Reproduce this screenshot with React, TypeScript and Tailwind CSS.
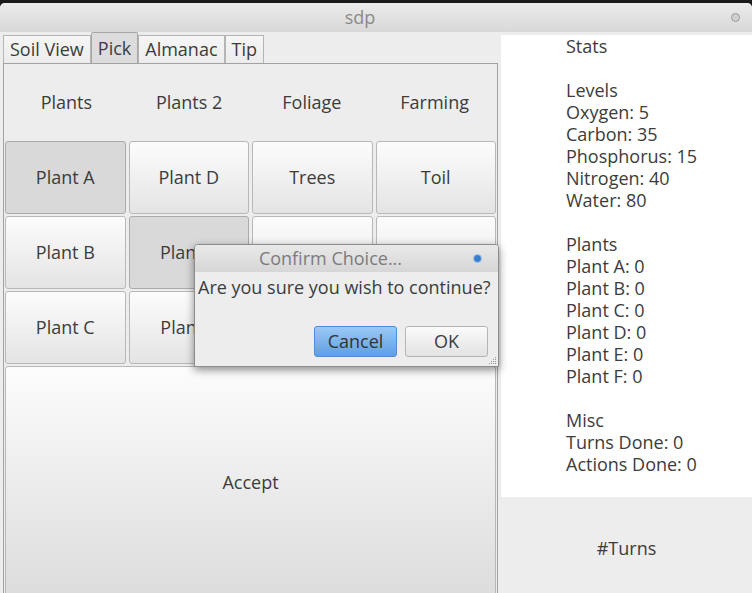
const font = { fontFamily: '"Open Sans", "DejaVu Sans", sans-serif' }

function Btn({ label, pressed }: { label?: string; pressed?: boolean }) {
    return (
        <div
            className={
                'flex items-center justify-center rounded-[3px] border text-[18px] text-[#3c3c3c] ' +
                (pressed
                    ? 'border-[#ababab] bg-[#d9d9d9]'
                    : 'border-[#b8b8b8] bg-gradient-to-b from-[#fcfcfc] to-[#e4e4e4]')
            }
        >
            {label}
        </div>
    )
}

function Tab({ label, active }: { label: string; active?: boolean }) {
    return (
        <div
            className={
                'flex items-center border border-b-0 px-[6px] text-[18px] text-[#3c3c3c] ' +
                (active
                    ? 'h-[31px] rounded-t-[2px] border-[#a6a6a6] bg-[#dcdcdc]'
                    : 'h-[28px] border-[#b5b5b5] bg-gradient-to-b from-[#f6f6f6] to-[#ececec]')
            }
        >
            {label}
        </div>
    )
}

const stats = [
    'Stats',
    '',
    'Levels',
    'Oxygen: 5',
    'Carbon: 35',
    'Phosphorus: 15',
    'Nitrogen: 40',
    'Water: 80',
    '',
    'Plants',
    'Plant A: 0',
    'Plant B: 0',
    'Plant C: 0',
    'Plant D: 0',
    'Plant E: 0',
    'Plant F: 0',
    '',
    'Misc',
    'Turns Done: 0',
    'Actions Done: 0',
]

export default function App() {
    return (
        <div className="relative h-[593px] w-[752px] overflow-hidden bg-[#1a1a1a] pt-[3px]" style={font}>
            {/* window */}
            <div className="flex h-full flex-col overflow-hidden rounded-t-[5px] bg-[#ededed]">
                {/* title bar */}
                <div className="relative flex h-[29px] shrink-0 items-center justify-center bg-gradient-to-b from-[#ebebeb] to-[#d8d8d8] pr-[32px] text-[18px] text-[#8a8a8a]">
                    sdp
                    <div className="absolute right-[12px] top-[10px] h-[9px] w-[9px] rounded-full border border-[#9a9a9a] bg-[#d0d0d0]"></div>
                </div>

                <div className="flex flex-1">
                    {/* left side */}
                    <div className="flex w-[501px] flex-col pl-[3px] pr-[3px]">
                        <div className="flex h-[31px] items-end">
                            <Tab label="Soil View" />
                            <Tab label="Pick" active />
                            <Tab label="Almanac" />
                            <Tab label="Tip" />
                        </div>
                        <div className="flex flex-1 flex-col border border-[#a2a2a2] px-[1px]">
                            <div className="grid h-[77px] shrink-0 grid-cols-4 items-center text-center text-[18px] text-[#3c3c3c]">
                                <span>Plants</span>
                                <span>Plants 2</span>
                                <span>Foliage</span>
                                <span>Farming</span>
                            </div>
                            <div className="grid shrink-0 grid-cols-4 grid-rows-[73px_73px_73px] gap-[2px] gap-x-[3px]">
                                <Btn label="Plant A" pressed />
                                <Btn label="Plant D" />
                                <Btn label="Trees" />
                                <Btn label="Toil" />
                                <Btn label="Plant B" />
                                <Btn label="Plant E" pressed />
                                <Btn />
                                <Btn />
                                <Btn label="Plant C" />
                                <Btn label="Plant F" />
                                <Btn />
                                <Btn />
                            </div>
                            <div className="mt-[2px] flex h-[232px] shrink-0 items-center justify-center rounded-[3px] border border-[#b8b8b8] bg-gradient-to-b from-[#fcfcfc] to-[#dcdcdc] text-[18px] text-[#3c3c3c]">
                                Accept
                            </div>
                        </div>
                    </div>

                    {/* right side */}
                    <div className="mt-[3px] flex flex-1 flex-col">
                        <div className="h-[462px] bg-white pl-[65px] text-[18px] leading-[22px] text-[#3c3c3c]">
                            {stats.map((s, i) => (
                                <div key={i} className="h-[22px]">
                                    {s}
                                </div>
                            ))}
                        </div>
                        <div className="flex flex-1 items-center justify-center text-[18px] text-[#3c3c3c]">#Turns</div>
                    </div>
                </div>
            </div>

            {/* dialog */}
            <div className="absolute left-[194px] top-[244px] flex h-[123px] w-[305px] flex-col overflow-hidden rounded-t-[4px] border border-[#8c8c8c] bg-[#ededed] shadow-[0_3px_8px_rgba(0,0,0,0.45)]">
                <div className="relative flex h-[27px] shrink-0 items-center justify-center bg-gradient-to-b from-[#e9e9e9] to-[#d6d6d6] pr-[32px] text-[18px] text-[#7c7c7c]">
                    Confirm Choice...
                    <div className="absolute right-[16px] top-[9px] h-[9px] w-[9px] rounded-full border border-[#a9c4e6] bg-[#3a7ed2]"></div>
                </div>
                <div className="mt-[3px] pl-[3px] text-[18px] leading-[25px] text-[#3c3c3c]">Are you sure you wish to continue?</div>
                <div className="mt-[26px] flex justify-end gap-[8px] pr-[10px]">
                    <div className="flex h-[31px] w-[83px] items-center justify-center rounded-[3px] border border-[#4f8ed6] bg-gradient-to-b from-[#9bc8f4] to-[#5e9fe4] text-[18px] text-[#333]">
                        Cancel
                    </div>
                    <div className="flex h-[31px] w-[83px] items-center justify-center rounded-[3px] border border-[#b5b5b5] bg-gradient-to-b from-[#fbfbfb] to-[#e2e2e2] text-[18px] text-[#3c3c3c]">
                        OK
                    </div>
                </div>
                <svg className="absolute bottom-[1px] right-[1px]" width="9" height="9" viewBox="0 0 9 9">
                    <g fill="#9a9a9a">
                        <rect x="7" y="1" width="1" height="1" />
                        <rect x="5" y="3" width="1" height="1" />
                        <rect x="7" y="3" width="1" height="1" />
                        <rect x="3" y="5" width="1" height="1" />
                        <rect x="5" y="5" width="1" height="1" />
                        <rect x="7" y="5" width="1" height="1" />
                        <rect x="1" y="7" width="1" height="1" />
                        <rect x="3" y="7" width="1" height="1" />
                        <rect x="5" y="7" width="1" height="1" />
                        <rect x="7" y="7" width="1" height="1" />
                    </g>
                </svg>
            </div>
        </div>
    )
}
